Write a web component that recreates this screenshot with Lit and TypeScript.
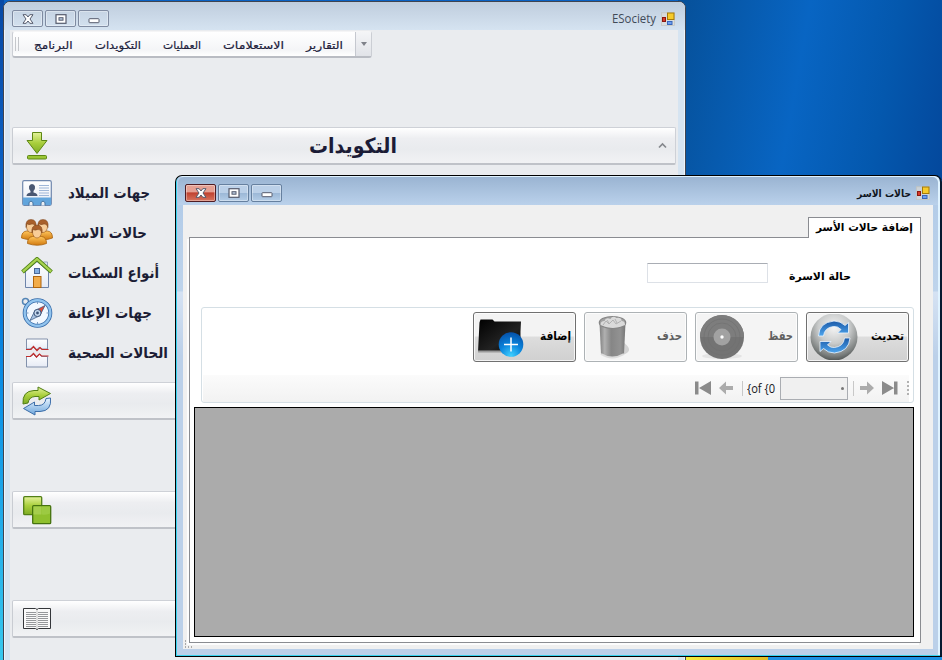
import { LitElement, html, css, svg } from "lit";
import { customElement, property } from "lit/decorators.js";

// A label whose glyphs are condensed or widened to fill a given width.
@customElement("fit-text")
class FitText extends LitElement {
  @property({ type: Number }) w = 50;
  static styles = css`
    :host { display: inline-block; white-space: nowrap; flex: none; overflow: visible; }
    .in { display: inline-block; transform-origin: 0 50%; }
  `;
  render() { return html`<span class="in"><slot></slot></span>`; }
  firstUpdated() {
    const el = this.renderRoot.querySelector(".in") as HTMLElement;
    const natural = el.getBoundingClientRect().width;
    this.style.width = this.w + "px";
    if (natural > 0) el.style.transform = `scaleX(${this.w / natural})`;
  }
}

const gradients = svg`<defs>
  <linearGradient id="green" x1="0" y1="0" x2="0" y2="1"><stop offset="0" stop-color="#e4f29a"/><stop offset=".5" stop-color="#a9cf3c"/><stop offset="1" stop-color="#7dab24"/></linearGradient>
  <linearGradient id="sky" x1="0" y1="0" x2="0" y2="1"><stop offset="0" stop-color="#e8f4ff"/><stop offset="1" stop-color="#6da6dc"/></linearGradient>
  <linearGradient id="amber" x1="0" y1="0" x2="0" y2="1"><stop offset="0" stop-color="#ffc65c"/><stop offset="1" stop-color="#d17a10"/></linearGradient>
  <linearGradient id="paper" x1="0" y1="0" x2="0" y2="1"><stop offset="0" stop-color="#fff"/><stop offset="1" stop-color="#e6ebf5"/></linearGradient>
  <linearGradient id="black" x1="0" y1="0" x2="1" y2="1"><stop offset="0" stop-color="#000"/><stop offset=".6" stop-color="#222"/><stop offset="1" stop-color="#000"/></linearGradient>
  <linearGradient id="can" x1="0" y1="0" x2="1" y2="0"><stop offset="0" stop-color="#808080"/><stop offset=".2" stop-color="#b0b0b0"/><stop offset=".45" stop-color="#868686"/><stop offset=".8" stop-color="#929292"/><stop offset="1" stop-color="#777"/></linearGradient>
  <radialGradient id="ball" cx=".5" cy=".3" r=".75"><stop offset="0" stop-color="#f4f4f4"/><stop offset=".45" stop-color="#c9cbcb"/><stop offset=".8" stop-color="#7b7f7e"/><stop offset="1" stop-color="#3f4342"/></radialGradient>
  <radialGradient id="plus" cx=".5" cy=".95" r=".95"><stop offset="0" stop-color="#3fd0ff"/><stop offset=".5" stop-color="#0a84dc"/><stop offset="1" stop-color="#0550a8"/></radialGradient>
  <linearGradient id="arc" x1="0" y1="0" x2="0" y2="1"><stop offset="0" stop-color="#1b5aa8"/><stop offset="1" stop-color="#4fa6ee"/></linearGradient>
</defs>`;

const icon = (w: number, h: number, body: unknown) =>
  html`<svg width=${w} height=${h} viewBox="0 0 ${w} ${h}">${gradients}${body}</svg>`;

const person = (x: number, y: number) => svg`<g transform="translate(${x} ${y})">
  <path d="M-9.500 15.500q0-6.500 5-7h9q5 .5 5 7q-9 3.500-19 0z" fill="url(#amber)" stroke="#a8620e" stroke-width=".8"/>
  <ellipse cx="0" cy="4" rx="4.500" ry="6" fill="#f8cd98" stroke="#a5672a" stroke-width=".7"/>
  <path d="M-5 5Q-6-3 0-3Q6-3 5 5Q4 1 1 1.500Q-3 3-4 1Z" fill="#a9602a" stroke="#7b4219" stroke-width=".5"/></g>`;

const icons = {
  app: icon(14, 14, svg`<rect x=".5" y=".8" width="13" height="12.700" fill="#dedbd5" fill-opacity=".65" stroke="#c4c4bd" stroke-width=".7"/>
    <rect x="6.500" y="1" width="6.500" height="6.500" fill="#f6cb2b" stroke="#a57b08"/><rect x="1.500" y="5.500" width="3" height="4" fill="#d93a26" stroke="#8b1710"/><rect x="6.500" y="9.500" width="4.500" height="3" fill="#6e9ff0" stroke="#3866ba"/>`),
  down: icon(30, 30, svg`<path d="M10.500 1.500h9v8h5.500L15 22.500 5 9.500h5.500z" fill="url(#green)" stroke="#5d8714"/><rect x="5.500" y="24.500" width="19" height="3.500" rx="1" fill="#9bc635" stroke="#5d8714"/>`),
  card: icon(30, 26, svg`<rect x=".7" y=".7" width="28.600" height="24.600" rx="1.500" fill="url(#paper)" stroke="#6f87ad" stroke-width="1.200"/>
    <path d="M1 17.500h28v7.500H1z" fill="#62a5dc"/><path d="M4.500 16q0-3 4-3.500V11q-2-2-1.500-4.500Q7.500 4 10 4t3 2.500Q13.500 9 11.500 11v1.500q4 .5 4 3.500z" fill="#4a5873"/>
    <path d="M17 5.500h10M17 8h10M17 10.500h10M17 13h10M17 15.500h10" stroke="#9fb7d8"/><path d="M7 25.500v-3q2-3 4 0v3M19 25.500v-3q2-3 4 0v3" fill="#e9edf3" stroke="#44739f"/>`),
  people: icon(32, 28, svg`${person(10, 3.5)}${person(22, 3.5)}${person(16, 9)}`),
  house: icon(32, 32, svg`<path d="M22.500 5h4v9h-4z" fill="#dfe6f2" stroke="#98a6be"/><path d="M4.500 14.500 16 4.500l11.500 10v16h-23z" fill="url(#paper)" stroke="#6d84aa"/>
    <path d="M1.500 15 16 2l14.500 13" fill="none" stroke="#4e8014" stroke-width="4"/><path d="M1.800 14.700 16 2l14.200 12.700" fill="none" stroke="#a9d452" stroke-width="2.300"/>
    <rect x="13.500" y="11.500" width="5" height="5" fill="#83aee2" stroke="#4b6897"/><rect x="12.500" y="19.500" width="7.500" height="11" fill="#f2ac4a" stroke="#b0650e"/>`),
  compass: icon(32, 32, svg`<circle cx="4.500" cy="4.500" r="3" fill="none" stroke="#5586b6" stroke-width="1.500"/><circle cx="16.500" cy="16" r="12.800" fill="#f2f8ff" stroke="#356ba9" stroke-width="4"/><circle cx="16.500" cy="16" r="12.800" fill="none" stroke="#92c4ee" stroke-width="2.400"/>
    <g stroke="#7d9dc0"><path d="M16.500 5v2M16.500 25v2M5.500 16h2M25.500 16h2"/></g><path d="M24 8.500 19 18.500 14 13.500z" fill="#e24b35"/><path d="M9 23.500 14 13.500 19 18.500z" fill="#a9c3e2"/><path d="M24 8.500 14 13.500 9 23.500 19 18.500z" fill="none" stroke="#34557f" stroke-width=".7"/><circle cx="16.500" cy="16" r="3.600" fill="#c6d9ee" stroke="#3b5378"/><circle cx="16.500" cy="16" r="1.400" fill="#3b5378"/>`),
  health: icon(24, 30, svg`<path d="M1.500 1h21v10h-6l-2-2-3 3-3.500-3-3 2h-3.500z" fill="url(#paper)" stroke="#8291ab"/><path d="M1.500 29h21V18.500h-6l-2-2.500-3 3.500-3-3-3.500 2H1.500z" fill="url(#paper)" stroke="#8291ab"/><path d="M1 11.500h5l2.500-3 3.500 4 3-3 2 2h6.500M1 18.500h4.500l3-3 3 3.500 3-3 2 2h7" fill="none" stroke="#c22b2b" stroke-width="1.200"/>`),
  sync: icon(30, 30, svg`<path d="M1 18Q0 5 12 4.500h4V1L28.500 7.500 17 14V10.500h-4Q7 11 6 17z" fill="url(#green)" stroke="#527f16"/><path d="M28.500 12Q30 25 18 25.500h-5V29L1.500 22.500 12.500 16V19.500h4Q23 19.500 24 12.500z" fill="url(#sky)" stroke="#3d6ea9"/>`),
  squares: icon(30, 30, svg`<rect x="1.700" y="1.700" width="18" height="18" rx="1" fill="url(#green)" stroke="#527f16" stroke-width="1.300"/><rect x="10.700" y="10.700" width="18" height="18" rx="1" fill="#8fc02e" stroke="#45720f" stroke-width="1.300"/><path d="M11.500 11.500h8v8h-8z" fill="#a5ce4d"/><path d="M20 11.500h8v7q-5 2-8 1z" fill="#9cca42"/>`),
  book: icon(30, 24, svg`<path d="M1.500 1.500h12l1.500 1 1.500-1h12v20h-12l-1.500 1-1.500-1h-12z" fill="#fafafa" stroke="#34363a"/><path d="M15 3v19" stroke="#c5c5c5"/><path d="M4 5.500h10M4 7.500h10M4 9.500h10M4 11.500h10M4 13.500h10M4 15.500h10M4 17.500h10M4 19.500h10M16 5.500H26M16 7.500H26M16 9.500H26M16 11.500H26M16 13.500H26M16 15.500H26M16 17.500H26M16 19.500H26" stroke="#96989b"/>`),
  folder: icon(48, 42, svg`<path d="M2.500 6.500 3.500 3.500h12l2 2h26.500l-.5 10V36H1z" fill="url(#black)"/><path d="M1 34.500h38v2H1z" fill="#999"/><circle cx="34" cy="28.500" r="12.300" fill="url(#plus)"/><path d="M34 21.500v14M27 28.500h14" stroke="#fff" stroke-width="1.500"/>`),
  bin: icon(46, 46, svg`<path d="M35 28q11 8 2 12-5 3-12 2z" fill="#d2d2d2"/><path d="M11.500 9l1.500 31q11 7 23 0l1.500-31z" fill="url(#can)"/><ellipse cx="24.500" cy="8.500" rx="13.200" ry="6" fill="#a2a2a2" stroke="#858585" stroke-width="1.200"/><path d="M12.500 11q0-4 4-4 1-4 6-2 2-4 6-1 5-1 5 3 3.500 0 3.500 4-12 6-24.500 0z" fill="#dadada"/><path d="M15 11l3-4 3 3 4-4 3 4 5-3M19 6l2 3m6-4 2 4" stroke="#b2b2b2" fill="none"/><path d="M13 40q11 7 23 0" fill="none" stroke="#dcdcdc" stroke-width="2"/>`),
  disc: icon(46, 46, svg`<ellipse cx="23" cy="42" rx="20" ry="3" fill="#e4e4e4"/><circle cx="23" cy="23" r="22" fill="#737373"/><path d="M1 23a22 22 0 0 1 44 0z" fill="#7d7d7d"/><g fill="none" stroke="#6f6f6f" stroke-width=".6"><circle cx="23" cy="23" r="18"/><circle cx="23" cy="23" r="14"/></g><circle cx="23" cy="23" r="8.500" fill="#a2a2a2"/><circle cx="23" cy="23" r="1.700" fill="#fff"/>`),
  refresh: icon(48, 46, svg`<circle cx="24" cy="23" r="23.500" fill="url(#ball)"/><path d="M8.500 22Q9 8.500 24 7q6.500 0 11 4.500L38.500 8.500v10.500H27.500l3.500-3.500q-3.500-3.500-7.500-3Q14.500 13.500 13.500 22z" fill="url(#arc)" stroke="#edf6ff" stroke-width=".8"/><path d="M40 24Q39 37.500 24.500 39q-6.500 0-11-4.500L10 37.500V27.500H21l-3.500 3.500q3.500 3 7 2.500 9-1 10-9.500z" fill="url(#arc)" stroke="#edf6ff" stroke-width=".8"/>`),
  first: icon(18, 16, svg`<path d="M1 1.500h3.500v13H1zM17 1v14L5 8z" fill="#8b8b8b"/>`),
  last: icon(18, 16, svg`<path d="M13 1.500h3.500v13H13zM1 1v14L13 8z" fill="#8b8b8b"/>`),
  prev: icon(14, 14, svg`<path d="M0 7 7 .5V5h7v4H7v4.500z" fill="#acacac"/>`),
  next: icon(14, 14, svg`<path d="M14 7 7 .5V5H0v4h7v4.500z" fill="#acacac"/>`),
  close: icon(12, 10, svg`<path d="M1 .7h3.200L6 3 7.800.7H11L8 5l3 4.300H7.800L6 7 4.200 9.300H1L4 5z" fill="#fff" stroke="#555b6d"/>`),
  max: icon(12, 10, svg`<rect x="1" y=".7" width="10" height="8.600" fill="#fff" stroke="#555b6d" stroke-width="1.200"/><rect x="4" y="3.700" width="4" height="2.500" fill="#b8cbe0" stroke="#555b6d"/>`),
  min: icon(12, 10, svg`<rect x="1" y="4.700" width="10" height="4" rx=".6" fill="#fff" stroke="#555b6d"/>`),
};

const controls = () => html`<div class="controls">
  <span class="ctl x">${icons.close}</span><span class="ctl">${icons.max}</span><span class="ctl">${icons.min}</span></div>`;

@customElement("app-root")
class AppRoot extends LitElement {
  static styles = css`
    :host { display: block; width: 942px; height: 660px; font-family: "DejaVu Sans", sans-serif; }
    * { box-sizing: border-box; }
    svg { display: block; flex: none; }
    .desk { position: relative; width: 942px; height: 660px; overflow: hidden; background: linear-gradient(#0a62c4, #1c90e4); }
    .left { position: absolute; left: 0; top: 0; width: 4px; height: 660px; background: linear-gradient(#0749a5, #0868cf 35%, #0b91e6 60%, #37c8ee); }
    .right { position: absolute; left: 678px; top: 0; width: 264px; height: 180px; background: linear-gradient(100deg, #065099, #0865c3 45%, #0458ae 75%, #04489c); }
    .low { position: absolute; left: 685px; top: 655px; width: 257px; height: 5px; background: linear-gradient(90deg, #f5ec3d, #e0bd25 83px, #1c90e4 83px); }
    .win { position: absolute; border: 1px solid #3f4450; display: flex; flex-direction: column; }
    .main { left: 3px; top: 1px; width: 683px; height: 670px; border-radius: 7px 7px 0 0; background: #d6e4f1; box-shadow: inset 1px 1px #eef4fa, inset -1px 0 #eef4fa; }
    .title { display: flex; align-items: center; justify-content: space-between; flex: none; }
    .main .title { height: 28px; padding: 5px 10px 0 8px; background: linear-gradient(#bfcddd, #d5e3f1); border-radius: 6px 6px 0 0; }
    .controls { display: flex; gap: 2px; }
    .ctl { width: 31px; height: 17px; border: 1px solid #7f8ba1; border-radius: 2px; display: flex; align-items: center; justify-content: center; box-shadow: inset 0 0 0 1px rgba(255,255,255,.35); }
    .name { display: flex; align-items: center; gap: 5px; font: 12px "Open Sans", sans-serif; color: #414a58; }
    .client { margin: 0 7px 0 6px; flex: 1; background: #eaecef; }
    .menu { margin: 1px 0 0 2px; width: 360px; height: 27px; display: flex; background: linear-gradient(#fff, #f4f5f7 75%, #fff); border: 1px solid #cbced4; border-top-color: #f5f5f6; border-bottom: 2px solid #b9bcc3; border-radius: 3px; font-size: 11px; color: #20203a; -webkit-text-stroke: .2px #20203a; }
    .grip { width: 6px; margin: 5px 0 5px 2px; background: repeating-linear-gradient(90deg, #c5c7cb 0 1px, transparent 1px 3px); }
    .items { flex: 1; display: flex; gap: 22px; align-items: center; padding: 2px 0 0 13px; }
    .more { width: 16px; border-left: 1px solid #c5c8cf; background: linear-gradient(#f4f5f7, #e1e3e8); display: flex; align-items: center; justify-content: center; }
    .caret { border: 3.5px solid transparent; border-top: 4px solid #7f8289; border-bottom: 0; }
    .bar { margin-left: 2px; width: 664px; height: 38px; border: 1px solid #ced1d7; border-bottom: 2px solid #bfc2c8; border-left-color: #c9ccd2; border-radius: 2px; background: linear-gradient(#fff, #edeef1 30%, #e9ebee 60%, #f1f2f4); display: grid; grid-template-columns: 288px 88px 1fr; align-items: center; padding: 1px 8px 0; }
    .bar.first { margin-top: 69px; }
    .bar.b2 { margin-top: 8px; }
    .bar.gap { margin-top: 71px; }
    .head { font-size: 21px; font-weight: bold; color: #1b1b36; line-height: 30px; }
    .up { justify-self: end; margin-top: -1px; }
    .bar .ic { padding-left: 1px; }
    .list { padding-top: 8px; height: 209px; }
    .item { height: 40px; display: grid; grid-template-columns: 34px 120px; column-gap: 14px; align-items: center; padding-left: 10px; font-size: 15px; font-weight: bold; color: #1c1d35; }
    .item svg { justify-self: center; }
    .dialog { left: 175px; top: 175px; width: 767px; height: 482px; border: 1px solid #000; border-radius: 7px 7px 0 0; padding: 0; background: linear-gradient(#b3cce8 30px, #bed4ec 115px, #d5e2f3 116px, #bbd0e9 180px, #bbd0e9); box-shadow: inset 1px -1px #38d3ee, inset -2px 1px #e0f3ff; border-right: 2px solid #061930; }
    .dialog .title { height: 28px; padding: 5px 8px 0 7px; background: linear-gradient(#9ab4d2, #bad1eb); margin: 1px 2px 0 2px; border-radius: 6px 6px 0 0; }
    .dialog .ctl { height: 18px; margin-top: -1px; border-color: #66809f; background: linear-gradient(#bbd0e8 50%, #9bb7d6 50%, #b4cde7); }
    .dialog .x { border-color: #4e1c23; background: linear-gradient(#e5a093 45%, #bf402e 48%, #d77560); }
    .dialog .name { font: bold 10px "DejaVu Sans", sans-serif; color: #11161e; gap: 5px; }
    .dialog .name svg { margin-top: -2px; }
    .body { margin: 0 7px 7px 7px; flex: 1; background: #f0f0f0; display: flex; flex-direction: column; padding: 12px 12px 6px 4px; }
    .tab { align-self: flex-end; width: 113px; height: 21px; border: 1px solid #8a8c91; border-bottom: 0; background: #fff; display: flex; align-items: center; justify-content: center; font-size: 11px; font-weight: bold; color: #000; z-index: 1; padding-bottom: 2px; }
    .page { flex: 1; margin-top: -1px; margin-left: 2px; border: 1px solid #8a8c91; background: #fff; box-shadow: -2px 2px #fdfdfd; padding: 25px 6px 5px 4px; display: flex; flex-direction: column; }
    .field { display: flex; height: 44px; padding-left: 453px; gap: 21px; font-size: 11px; font-weight: bold; }
    .input { width: 121px; height: 20px; border: 1px solid #dde1e7; border-top-color: #a9adb4; border-radius: 1px; }
    .field fit-text { margin-top: 7px; }
    .group { margin-left: 7px; width: 713px; height: 96px; border: 1px solid #d5dfe5; border-radius: 3px; padding: 4px 4px 0 1px; display: flex; flex-direction: column; justify-content: space-between; flex: none; }
    .buttons { display: flex; gap: 8px; justify-content: flex-end; }
    .btn { width: 103px; height: 50px; border: 1px solid #707070; border-radius: 3px; background: linear-gradient(#f3f3f3 48%, #dddddd 50%, #d0d0d0); box-shadow: inset 0 0 0 1px rgba(255,255,255,.75); display: flex; align-items: center; justify-content: space-between; padding: 0 4px 1px 3px; font-size: 12px; font-weight: bold; }
    .btn fit-text { margin-top: -1px; }
    .btn.off { border-color: #adb2b5; background: #f4f4f4; color: #606060; }
    .nav { height: 27px; background: linear-gradient(#fbfbfb, #f2f2f2); display: flex; align-items: center; justify-content: flex-end; padding: 0 0 1px 0; }
    .sep { width: 1px; height: 15px; background: #c8c8c8; }
    .of { font: 12px "Open Sans", sans-serif; color: #16161c; margin: 0 5px 0 4px; }
    .combo { width: 68px; height: 23px; border: 1px solid #aaadb2; background: #f0f0f0; display: flex; align-items: center; justify-content: flex-end; padding-right: 3px; }
    .dot { width: 3px; height: 3px; border-radius: 50%; background: #777; }
    .dots { width: 2px; height: 15px; background: repeating-linear-gradient(#b2b2b2 0 2px, transparent 2px 4px); }
    .n1 { margin-right: 7px; } .n2 { margin-right: 9px; } .s2 { margin: 0 6px 0 5px; } .n3 { margin-right: 7px; } .n4 { margin-right: 8px; }
    .grid { margin-top: 4px; flex: 1; border: 1px solid #000; background: #ababab; }
    .size { position: absolute; left: 8px; top: 463px; }
  `;

  menu: [string, number][] = [["البرنامج", 38.5], ["التكويدات", 46], ["العمليات", 38], ["الاستعلامات", 61], ["التقارير", 37]];
  entries: [unknown, string, number][] = [
    [icons.card, "جهات الميلاد", 82], [icons.people, "حالات الاسر", 79], [icons.house, "أنواع السكنات", 91],
    [icons.compass, "جهات الإعانة", 84], [icons.health, "الحالات الصحية", 100]];
  actions: [unknown, string, number, boolean][] = [
    [icons.folder, "إضافة", 31, true], [icons.bin, "حذف", 25, false], [icons.disc, "حفظ", 25, false], [icons.refresh, "تحديث", 33, true]];

  render() {
    return html`<div class="desk">
      <div class="left"></div><div class="right"></div><div class="low"></div>
      <div class="win main">
        <div class="title">${controls()}<div class="name"><fit-text w="44">ESociety</fit-text>${icons.app}</div></div>
        <div class="client">
          <div class="menu"><span class="grip"></span>
            <div class="items">${this.menu.map(([t, w]) => html`<fit-text w=${w}>${t}</fit-text>`)}</div>
            <span class="more"><span class="caret"></span></span></div>
          <div class="bar first"><span class="ic">${icons.down}</span><fit-text class="head" w="88">التكويدات</fit-text>
            <svg class="up" width="9" height="7" viewBox="0 0 9 7"><path d="M1 5.500 4.500 2 8 5.500" fill="none" stroke="#85888d" stroke-width="1.700"/></svg></div>
          <div class="list">${this.entries.map(([i, t, w]) => html`<div class="item">${i}<fit-text w=${w}>${t}</fit-text></div>`)}</div>
          <div class="bar b2"><span class="ic">${icons.sync}</span></div>
          <div class="bar gap"><span class="ic">${icons.squares}</span></div>
          <div class="bar gap"><span class="ic">${icons.book}</span></div>
        </div>
      </div>
      <div class="win dialog">
        <div class="title">${controls()}<div class="name"><fit-text w="54">حالات الاسر</fit-text>${icons.app}</div></div>
        <div class="body">
          <div class="tab"><fit-text w="97">إضافة حالات الأسر</fit-text></div>
          <div class="page">
            <div class="field"><div class="input"></div><fit-text w="62">حالة الاسرة</fit-text></div>
            <div class="group">
              <div class="buttons">${this.actions.map(([i, t, w, on]) => html`<div class="btn ${on ? "" : "off"}">${i}<fit-text w=${w}>${t}</fit-text></div>`)}</div>
              <div class="nav">
                <span class="n1">${icons.first}</span><span class="n2">${icons.prev}</span><span class="sep"></span>
                <fit-text class="of" w="28">{of {0</fit-text><div class="combo"><span class="dot"></span></div>
                <span class="sep s2"></span><span class="n3">${icons.next}</span><span class="n4">${icons.last}</span><span class="dots"></span>
              </div>
            </div>
            <div class="grid"></div>
          </div>
        </div>
        <svg class="size" width="9" height="9" viewBox="0 0 9 9"><path d="M1 1h1v2H1zM1 4h1v2H1zM1 7h1v2H1zM4 7h1v2H4zM7 7h1v2H7z" fill="#a9a9a9"/></svg>
      </div>
    </div>`;
  }
}
